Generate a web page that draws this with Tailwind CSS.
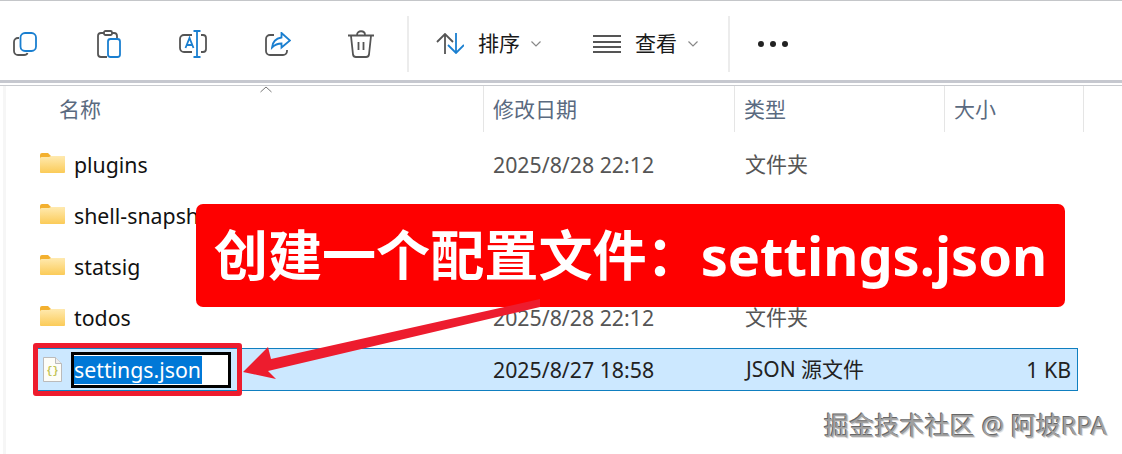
<!DOCTYPE html>
<html>
  <head>
    <meta charset="utf-8" />
    <title>settings.json</title>
    <script src="https://cdn.jsdelivr.net/npm/@tailwindcss/browser@4"></script>
  </head>
  <body class="relative w-[1122px] h-[454px] overflow-hidden bg-white font-['Noto_Sans','Noto_Sans_CJK_SC',sans-serif] text-[21px] text-[#1a1a1a]">
    <svg class="absolute w-0 h-0">
      <defs>
        <linearGradient id="folder-front" x1="0" y1="0" x2="0" y2="1">
          <stop offset="0" stop-color="#ffeab0" />
          <stop offset="1" stop-color="#fbcb58" />
        </linearGradient>
      </defs>
      <symbol id="folder" viewBox="0 0 25 20">
        <path d="M0 2a2 2 0 0 1 2-2h6l3 3h12a2 2 0 0 1 2 2v13a2 2 0 0 1-2 2H2a2 2 0 0 1-2-2z" fill="#f3b02f" />
        <path d="M0 5.500a1.500 1.500 0 0 1 1.500-1.500H9l2-1h12.500A1.500 1.500 0 0 1 25 4.500V18.500a1.500 1.500 0 0 1-1.500 1.500h-22A1.500 1.500 0 0 1 0 18.500z" fill="url(#folder-front)" />
      </symbol>
    </svg>
    <!-- Toolbar -->
    <div class="h-[83px] border-t border-[#c4c6c9] border-b-[3px] border-b-[#c6c8cf] flex items-center pt-[6px]">
      <div class="flex items-center w-[407px] h-[56px] pl-[13px]">
        <svg class="w-[24px] h-[24px] shrink-0" viewBox="0 0 24 24" fill="none" stroke-width="1.800"><path d="M6 6H5a4 4 0 0 0-4 4v9a4 4 0 0 0 4 4h6c2 0 3-.500 3.500-2" stroke="#555"/><rect x="7.500" y="1" width="15.500" height="18" rx="4.500" stroke="#1a7fd0"/></svg>
        <svg class="w-[24px] h-[28px] ml-[60px] shrink-0" viewBox="0 0 24 28" fill="none" stroke-width="1.800"><path d="M7 3H4a3 3 0 0 0-3 3v18a3 3 0 0 0 3 3h6M15 3h2a3 3 0 0 1 3 3v2" stroke="#555"/><rect x="7" y="1" width="8" height="4" rx="1.500" stroke="#555"/><rect x="11" y="9" width="12" height="18" rx="2.500" stroke="#1a7fd0"/></svg>
        <svg class="w-[28px] h-[28px] ml-[58px] shrink-0" viewBox="0 0 28 28" fill="none" stroke-width="1.800"><path d="M13 5H5a4 4 0 0 0-4 4v9a4 4 0 0 0 4 4h8M22 5h2a3 3 0 0 1 3 3v11a3 3 0 0 1-3 3h-2" stroke="#555"/><path d="M6.500 18l4-10 4 10M8 15h5M18 1v26M14.500 1h7M14.500 27h7" stroke="#1a7fd0"/></svg>
        <svg class="w-[26px] h-[24px] ml-[58px] shrink-0" viewBox="0 0 26 24" fill="none" stroke-width="1.800"><path d="M9 3H5a4 4 0 0 0-4 4v12a4 4 0 0 0 4 4h13a4 4 0 0 0 4-4v-1" stroke="#555"/><path d="M16.500 1l8.500 7.500-8.500 7v-4c-4 0-6.500 1-9.500 4 .500-5.500 4-9 9.500-10z" stroke="#1a7fd0"/></svg>
        <svg class="w-[26px] h-[28px] ml-[57px] shrink-0" viewBox="0 0 26 28" fill="none" stroke="#555" stroke-width="1.800"><path d="M0 5.500h26M9 5c0-5 8-5 8 0M3 6l2 18.500a3 3 0 0 0 3 2.500h10a3 3 0 0 0 3-2.500L23 6M10.500 12v8M15.500 12v8"/></svg>
      </div>
      <div class="flex items-center w-[321px] h-[56px] border-l-2 border-[#ececec]">
        <svg class="w-[28px] h-[21px] ml-[27px] shrink-0" viewBox="0 0 28 21" fill="none" stroke-width="1.800"><path d="M9 21V1.500M1 9l8-8 8 8" stroke="#555"/><path d="M20 0v20M12 12l8 8 8-8" stroke="#1a7fd0"/></svg>
        <span class="ml-[14px]">排序</span>
        <svg class="w-[10px] h-[6px] ml-[11px] shrink-0" viewBox="0 0 10 6" fill="none" stroke="#888" stroke-width="1.200"><path d="M.500.500L5 5 9.500.500"/></svg>
        <svg class="w-[28px] h-[18px] ml-[52px] shrink-0" viewBox="0 0 28 18" fill="none" stroke="#555" stroke-width="2"><path d="M0 1h28M0 7h28M0 12h28M0 17h28"/></svg>
        <span class="ml-[14px]">查看</span>
        <svg class="w-[10px] h-[6px] ml-[11px] shrink-0" viewBox="0 0 10 6" fill="none" stroke="#888" stroke-width="1.200"><path d="M.500.500L5 5 9.500.500"/></svg>
      </div>
      <div class="flex items-center h-[56px] border-l-2 border-[#ececec] pl-[28px] gap-[6px]">
        <span class="w-[6px] h-[6px] rounded-full bg-[#222]"></span>
        <span class="w-[6px] h-[6px] rounded-full bg-[#222]"></span>
        <span class="w-[6px] h-[6px] rounded-full bg-[#222]"></span>
      </div>
    </div>
    <!-- File list -->
    <div class="mt-[2px] border-t border-[#c9cbcf]">
      <div class="relative grid grid-cols-[483px_251px_210px_140px] h-[46px] items-center text-[#5a6a80]">
        <div class="pl-[59px] pt-[2px]">名称</div>
        <div class="h-full flex items-center pt-[2px] pl-[9px] border-l border-[#e5e5e5]">修改日期</div>
        <div class="h-full flex items-center pt-[2px] pl-[9px] border-l border-[#e5e5e5]">类型</div>
        <div class="h-full flex items-center pt-[2px] pl-[9px] border-x border-[#e5e5e5]">大小</div>
        <svg class="absolute left-[260px] top-0 w-[12px] h-[7px]" viewBox="0 0 12 7" fill="none" stroke="#777" stroke-width="1"><path d="M.500 6L6 1l5.500 5"/></svg>
      </div>
      <div class="flex flex-col mt-[7px] pl-[37px] pr-[44px] text-[21.300px]">
        <div class="grid grid-cols-[446px_252px_1fr_auto] items-center h-[51px] text-[#111]">
          <div class="flex items-center gap-[9px] pl-[3px]">
            <svg class="w-[25px] h-[20px] shrink-0 -mt-[4px]"><use href="#folder" /></svg>
            plugins
          </div>
          <div class="pl-[10px] text-[#555]">2025/8/28 22:12</div>
          <div class="pl-[10px] text-[#555] text-[21px]">文件夹</div>
          <div></div>
        </div>
        <div class="grid grid-cols-[446px_252px_1fr_auto] items-center h-[51px] text-[#111]">
          <div class="flex items-center gap-[9px] pl-[3px]">
            <svg class="w-[25px] h-[20px] shrink-0 -mt-[4px]"><use href="#folder" /></svg>
            shell-snapshots
          </div>
          <div></div><div></div><div></div>
        </div>
        <div class="grid grid-cols-[446px_252px_1fr_auto] items-center h-[51px] text-[#111]">
          <div class="flex items-center gap-[9px] pl-[3px]">
            <svg class="w-[25px] h-[20px] shrink-0 -mt-[4px]"><use href="#folder" /></svg>
            statsig
          </div>
          <div></div><div></div><div></div>
        </div>
        <div class="grid grid-cols-[446px_252px_1fr_auto] items-center h-[51px] text-[#111]">
          <div class="flex items-center gap-[9px] pl-[3px]">
            <svg class="w-[25px] h-[20px] shrink-0 -mt-[4px]"><use href="#folder" /></svg>
            todos
          </div>
          <div class="pl-[10px] text-[#555]">2025/8/28 22:12</div>
          <div class="pl-[10px] text-[#555] text-[21px]">文件夹</div>
          <div></div>
        </div>
        <!-- Selected row -->
        <div class="grid grid-cols-[446px_252px_1fr_auto] items-center h-[43px] mt-[5px] bg-[#cce8ff] border border-[#0f7fc0] text-[#111] pr-[6px]">
          <div class="flex items-center pl-[5px]">
            <svg class="w-[19px] h-[25px] shrink-0" viewBox="0 0 19 25"><path d="M.500.500h12l6 6v18H.500z" fill="#fdfdf8" stroke="#bbb"/><path d="M12.500.500v6h6" fill="#eee" stroke="#bbb"/><text x="3.500" y="17" font-size="10" font-weight="bold" fill="#c2c455" font-family="Liberation Mono">{}</text></svg>
            <div class="ml-[9px] w-[160px] h-[36px] border-[3px] border-black bg-white flex items-center">
              <span class="bg-[#0078d7] text-white leading-[28px] pr-[1px]">settings.json</span>
            </div>
          </div>
          <div class="pl-[9px] text-[#222]">2025/8/27 18:58</div>
          <div class="pl-[10px] text-[#222] text-[21px]">JSON 源文件</div>
          <div class="text-[#222]">1 KB</div>
        </div>
      </div>
    </div>
    <!-- Annotations over the screenshot -->
    <div class="absolute left-[3px] top-[86px] bottom-0 w-[3px] bg-[#f6f6f6]"></div>
    <div class="absolute left-[196px] top-[204px] w-[869px] h-[103px] rounded-[7px] bg-[#fe0000] flex items-center justify-center text-white font-bold text-[54.100px] whitespace-nowrap">创建一个配置文件：settings.json</div>
    <div class="absolute left-[33px] top-[343px] w-[209px] h-[53px] border-[5px] border-[#ed1c2e] rounded-[3px]"></div>
    <svg class="absolute left-[240px] top-[298px] w-[302px] h-[84px]" viewBox="0 0 302 84"><path d="M3 74L28 49l3 12L300 1v8L28 73l8 8z" fill="#ed1c2e" /></svg>
    <div class="absolute right-[15px] top-[407px] text-[25.200px] text-[#a0a0a0] whitespace-nowrap [text-shadow:-1px_-1px_0_#666,1px_1px_0_#ddd]">掘金技术社区 @ 阿坡RPA</div>
  </body>
</html>
